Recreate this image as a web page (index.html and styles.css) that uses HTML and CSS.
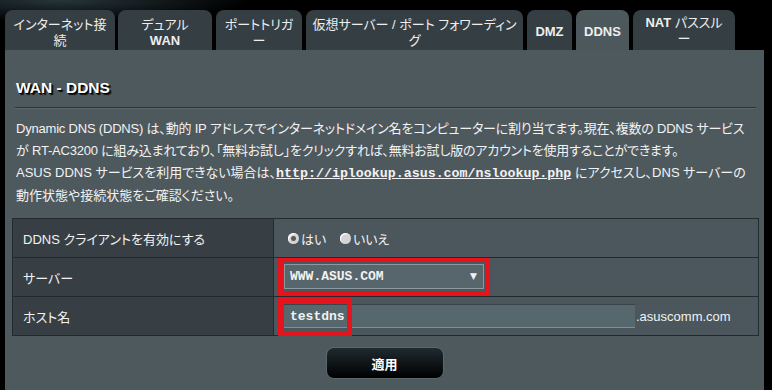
FILE: index.html
```html
<!DOCTYPE html>
<html>
<head>
    <title>WAN - DDNS</title>
    <link rel="stylesheet" href="styles.css">
</head>
<body>
    <div class="tabs">
        <div class="tab t1">インターネット接<br>続</div>
        <div class="tab t2">デュアル<br><b>WAN</b></div>
        <div class="tab t3">ポートトリガ<br>ー</div>
        <div class="tab t4">仮想サーバー / ポート フォワーディン<br>グ</div>
        <div class="tab t5"><b>DMZ</b></div>
        <div class="tab t6 active"><b>DDNS</b></div>
        <div class="tab t7"><b>NAT</b> パススル<br>ー</div>
    </div>
    <div class="panel">
        <h1>WAN - DDNS</h1>
        <div class="line"></div>
        <p class="desc tight">
            Dynamic DNS (DDNS) は、動的 IP アドレスでインターネットドメイン名をコンピューターに割り当てます。現在、複数の DDNS サービス<br>
            が RT-AC3200 に組み込まれており、「無料お試し」をクリックすれば、無料お試し版のアカウントを使用することができます。
        </p>
        <p class="desc">
            ASUS DDNS サービスを利用できない場合は、<a href="#" class="url">http://iplookup.asus.com/nslookup.php</a> にアクセスし、DNS サーバーの<br>
            動作状態や接続状態をご確認ください。
        </p>
        <table class="form">
            <tr>
                <th>DDNS クライアントを有効にする</th>
                <td>
                    <span class="radio checked"></span><span class="rlabel">はい</span>
                    <span class="radio"></span><span class="rlabel">いいえ</span>
                </td>
            </tr>
            <tr>
                <th>サーバー</th>
                <td>
                    <div class="mark-select">
                        <div class="select"><span>WWW.ASUS.COM</span><span class="arrow">▼</span></div>
                    </div>
                </td>
            </tr>
            <tr>
                <th>ホスト名</th>
                <td>
                    <div class="host">
                        <div class="hostwrap">
                            <input type="text" class="hostinput" value="testdns">
                            <div class="mark-host"></div>
                        </div>
                        <span class="suffix">.asuscomm.com</span>
                    </div>
                </td>
            </tr>
        </table>
        <div class="actions">
            <button class="apply">適用</button>
        </div>
    </div>
</body>
</html>
```

FILE: styles.css
```css
body {
    margin: 0;
    padding: 10px 0 0 5px;
    height: 390px;
    box-sizing: border-box;
    overflow: hidden;
    background: #000;
    background-image: radial-gradient(ellipse 190px 22px at 60px 0, #26353a 0%, rgba(0,0,0,0) 100%);
    font-family: Arial, "Liberation Sans", "Noto Sans CJK JP", sans-serif;
    font-size: 13px;
    color: #f2f2f2;
    font-feature-settings: "palt";
}
.tabs {
    display: flex;
    gap: 4px;
    height: 40px;
}
.tab {
    background: #353e43;
    border-radius: 8px 8px 0 0;
    text-align: center;
    line-height: 16px;
    padding-top: 7px;
    box-sizing: border-box;
    white-space: nowrap;
    color: #eee;
}
.tab b {
    font-weight: bold;
}
.t1 { width: 110px; margin-right: -1px; }
.t2 { width: 94px; }
.t3 { width: 86px; }
.t4 { width: 217px; }
.t5 { width: 45px; padding-top: 14px; }
.t6 { width: 53px; padding-top: 14px; }
.t7 { width: 102px; padding-top: 5px; }
.tab.active {
    background: #4d585d;
}
.panel {
    width: 759px;
    height: 340px;
    background: #4e595e;
    padding: 28px 0 0 0;
    box-sizing: border-box;
}
h1 {
    margin: 0 0 0 11px;
    font-size: 15.5px;
    line-height: 20px;
    color: #fff;
    text-shadow: 1px 1px 0 #000, 2px 2px 1px #111;
}
.line {
    margin: 9px 8px 0 10px;
    height: 1px;
    background: #2a3337;
    border-bottom: 1px solid #5c666b;
}
.desc {
    margin: 0 0 0 11px;
    line-height: 22px;
    white-space: nowrap;
}
.desc.tight {
    margin-top: 9px;
    letter-spacing: -0.2px;
}
.url {
    font-family: "Liberation Mono", monospace;
    font-weight: bold;
    font-size: 13.3px;
    color: #f2f2f2;
}
.form {
    margin: 11px 0 0 7px;
    width: 747px;
    border-collapse: collapse;
}
.form th, .form td {
    border: 1px solid #222a2e;
    height: 38px;
    padding: 0;
}
.form th {
    width: 250px;
    background: #373f44;
    text-align: left;
    font-weight: normal;
    padding-left: 10px;
}
.form td {
    background: #4b575c;
    padding-left: 4px;
}
.radio {
    display: inline-block;
    width: 11px;
    height: 11px;
    border-radius: 50%;
    background: #d4d4d4;
    vertical-align: 0;
    margin-left: 10px;
    box-shadow: inset 1px 1px 1px #fff;
}
.radio.checked {
    background: radial-gradient(circle, #5a5a5a 0 2px, #d4d4d4 3px);
}
.rlabel {
    margin-left: 2px;
}
.mark-select {
    width: 200px;
    margin: -2px 0 0;
    border: 5px solid #e5141c;
    padding: 2px 1px;
}
.select {
    display: flex;
    justify-content: space-between;
    align-items: center;
    height: 23px;
    background: #56666c;
    border: 1px solid #8c9a9f;
    padding: 0 6px 0 5px;
    font-family: "Liberation Mono", monospace;
    font-weight: bold;
    font-size: 13px;
}
.arrow {
    font-size: 9px;
    font-family: "DejaVu Sans", sans-serif;
}
.host {
    display: flex;
    align-items: center;
}
.hostwrap {
    position: relative;
    padding-left: 6px;
}
.hostinput {
    display: block;
    width: 351px;
    height: 24px;
    box-sizing: border-box;
    margin: 0;
    background: #56686e;
    border: none;
    border-top: 1px solid #3a4448;
    border-bottom: 1px solid #7f8e93;
    padding: 0 6px;
    color: #f2f2f2;
    font-family: "Liberation Mono", monospace;
    font-weight: bold;
    font-size: 13px;
}
.mark-host {
    position: absolute;
    left: 0;
    top: -6px;
    width: 64px;
    height: 28px;
    border: 5px solid #e5141c;
}
.suffix {
    margin-left: 1px;
}
.actions {
    display: flex;
    justify-content: center;
    margin-top: 11px;
}
.apply {
    width: 118px;
    height: 32px;
    border-radius: 8px;
    border: 1px solid #5b676c;
    background: linear-gradient(#1f2b30, #000);
    color: #fff;
    font-weight: bold;
    font-size: 13px;
    font-family: Arial, "Noto Sans CJK JP", sans-serif;
}
```
